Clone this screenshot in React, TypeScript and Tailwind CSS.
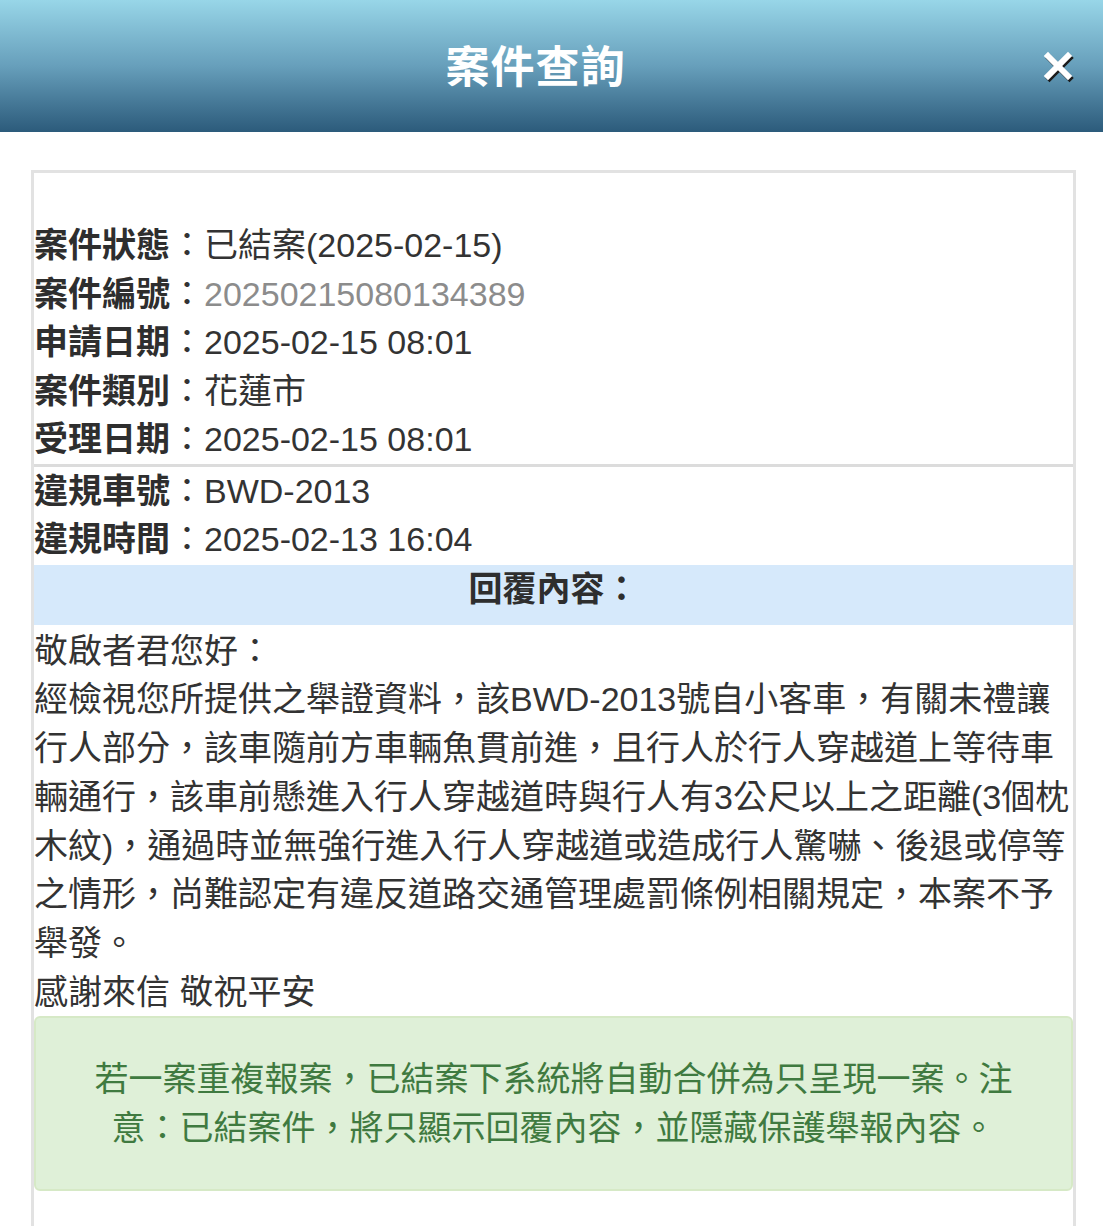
import React from "react";

const font = { fontFamily: '"Liberation Sans", "Noto Sans CJK TC", sans-serif' };

function Row({ label, value, gray }: { label: string; value: string; gray?: boolean }) {
  return (
    <div className="whitespace-nowrap leading-[48.5px]">
      <span className="font-bold text-[#2e2e2e]">{label}</span>
      <span className="text-[#333]">：</span>
      <span className={gray ? "text-[#8c8c8c]" : "text-[#333]"}>{value}</span>
    </div>
  );
}

export default function App() {
  const body = [
    "敬啟者君您好：",
    "經檢視您所提供之舉證資料，該BWD-2013號自小客車，有關未禮讓",
    "行人部分，該車隨前方車輛魚貫前進，且行人於行人穿越道上等待車",
    "輛通行，該車前懸進入行人穿越道時與行人有3公尺以上之距離(3個枕",
    "木紋)，通過時並無強行進入行人穿越道或造成行人驚嚇、後退或停等",
    "之情形，尚難認定有違反道路交通管理處罰條例相關規定，本案不予",
    "舉發。",
    "感謝來信 敬祝平安",
  ];
  return (
    <div className="w-[1103px] h-[1226px] overflow-hidden bg-white" style={font}>
      <header className="relative h-[132px] bg-gradient-to-b from-[#98d6e8] via-[#679fbb] to-[#2c5b7b] flex items-center justify-center">
        <h1 className="pr-8 pt-[3px] text-[44px] font-bold tracking-[1px] text-white leading-none">案件查詢</h1>
        <svg
          className="absolute left-[1043px] top-[51px]"
          width="32"
          height="32"
          viewBox="0 0 32 32"
        >
          <g stroke="#1b1b1b" strokeWidth="6" strokeLinecap="square" transform="translate(1.5,2)">
            <line x1="5" y1="5" x2="25" y2="25" />
            <line x1="25" y1="5" x2="5" y2="25" />
          </g>
          <g stroke="#ffffff" strokeWidth="6" strokeLinecap="square">
            <line x1="5" y1="5" x2="25" y2="25" />
            <line x1="25" y1="5" x2="5" y2="25" />
          </g>
        </svg>
      </header>

      <div className="pt-[38px] pl-[31px] pr-[27px]">
        <div className="border-[3px] border-b-0 border-[#e2e2e2] text-[34px] h-[1100px]">
          <div className="pt-[48px]">
            <Row label="案件狀態" value="已結案(2025-02-15)" />
            <Row label="案件編號" value="20250215080134389" gray />
            <Row label="申請日期" value="2025-02-15 08:01" />
            <Row label="案件類別" value="花蓮市" />
            <Row label="受理日期" value="2025-02-15 08:01" />
          </div>
          <div className="h-[3px] bg-[#dcdcdc]" />
          <div>
            <Row label="違規車號" value="BWD-2013" />
            <Row label="違規時間" value="2025-02-13 16:04" />
          </div>
          <div className="bg-[#d6e9fb] pb-[12px] mt-[1px] text-center font-bold leading-[48px] text-[#2e2e2e]">
            回覆內容：
          </div>
          <div className="pt-[2px] text-[#333] leading-[48.8px]">
            {body.map((l, i) => (
              <div key={i} className="whitespace-nowrap">
                {l}
              </div>
            ))}
          </div>
          <div className="-mt-[1px] rounded-[6px] border-2 border-[#d6e9c6] bg-[#dff0d8] pt-[37px] pb-[36px] text-center text-[#3f7a40] leading-[49px]">
            <div className="whitespace-nowrap">若一案重複報案，已結案下系統將自動合併為只呈現一案。注</div>
            <div className="whitespace-nowrap">意：已結案件，將只顯示回覆內容，並隱藏保護舉報內容。</div>
          </div>
        </div>
      </div>
    </div>
  );
}
